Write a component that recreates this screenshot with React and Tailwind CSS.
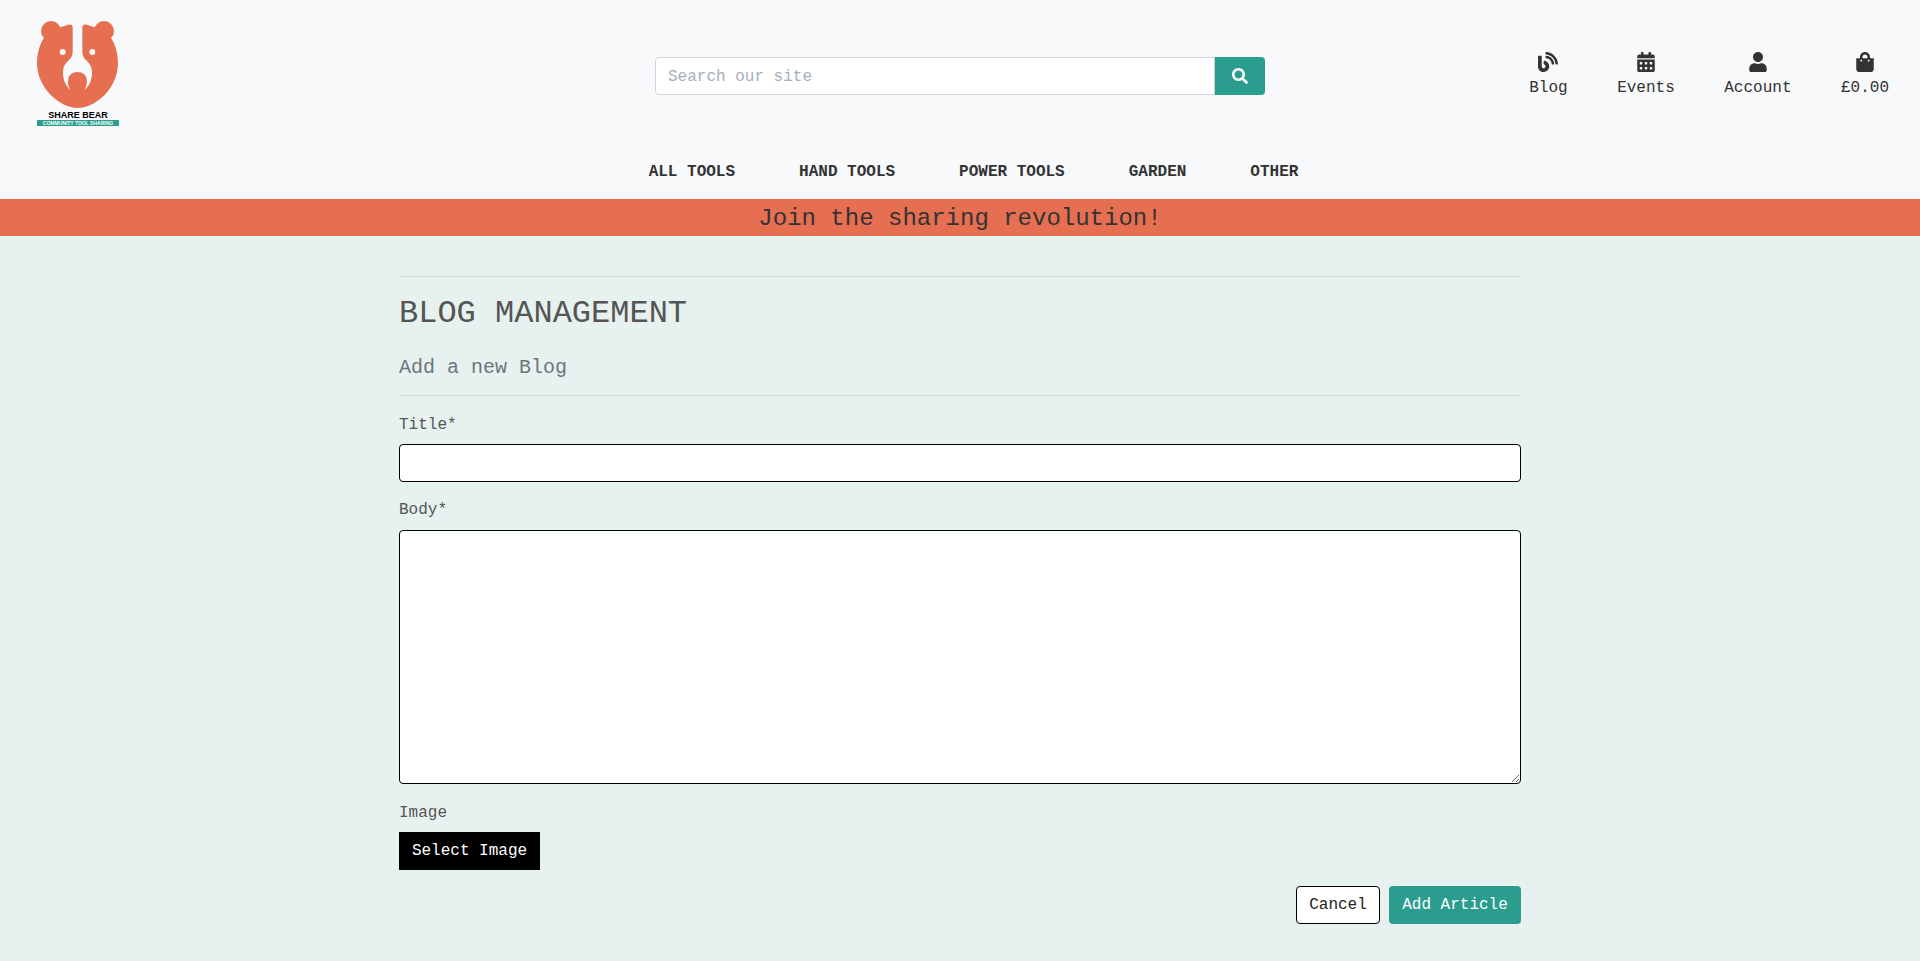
import { FaBlog, FaCalendarAlt, FaUser, FaShoppingBag, FaSearch } from "react-icons/fa";

const navLinks = ["ALL TOOLS", "HAND TOOLS", "POWER TOOLS", "GARDEN", "OTHER"];

const headerLinks = [
  { label: "Blog", icon: FaBlog },
  { label: "Events", icon: FaCalendarAlt },
  { label: "Account", icon: FaUser },
  { label: "£0.00", icon: FaShoppingBag },
];

function Logo() {
  return (
    <div className="flex flex-col w-[82px] mb-[6px]">
      <svg viewBox="37 20 82 90" className="w-[82px] h-[90px]">
        <circle cx="51" cy="31" r="10" fill="#e76f51" />
        <circle cx="104" cy="31" r="10" fill="#e76f51" />
        <path d="M44 38 C39 45 37 55 37 63 C37 88 60 108 77.7 108 C96 108 118 88 118 63 C118 55 116 45 111 38 L97 28 L86 24.5 Q82.3 24 82.3 27 L72.7 27 Q72.7 24 69 24.5 L58 28 Z" fill="#e76f51" />
        {/* wrench cut out of the face */}
        <path d="M72.7 26 L82.3 26 L82.3 50 C82.3 55 83 57 86 60 C89 63 92 66 92 73 C92 80 89 86 84.5 90 C88.5 84 88.5 72 77.5 72 C66.5 72 66.5 84 70.5 90 C66 86 63 80 63 73 C63 66 66 63 69 60 C72 57 72.7 55 72.7 50 Z" fill="#f8f9fa" />
        <circle cx="62.7" cy="52" r="3" fill="#f8f9fa" />
        <circle cx="92.3" cy="52" r="3" fill="#f8f9fa" />
      </svg>
      <div className="mt-[1px] text-center text-[9px] leading-[9px] font-black text-black font-['Liberation_Sans',sans-serif]">SHARE BEAR</div>
      <div className="h-[6px] bg-[#2a9d8f] text-center text-[5px] leading-[6px] font-bold text-white whitespace-nowrap font-['Liberation_Sans',sans-serif]">COMMUNITY TOOL SHARING</div>
    </div>
  );
}

export default function App() {
  return (
    <div className="min-h-screen bg-[#e7f1ef] font-['Liberation_Mono',monospace] text-[16px] text-[#555]">
      <header className="bg-[#f8f9fa]">
        <div className="grid grid-cols-[1fr_610px_1fr] items-center h-[152px]">
          <div className="pl-[37px]">
            <Logo />
          </div>
          <div className="flex h-[38px]">
            <input
              placeholder="Search our site"
              className="flex-1 min-w-0 h-full px-3 pt-[2px] bg-white border border-[#ced4da] rounded-l-[4px] outline-none placeholder:text-[#a6b0b8]"
            />
            <button className="w-[50px] h-full flex items-center justify-center bg-[#2a9d8f] text-white rounded-r-[4px]">
              <FaSearch className="w-4 h-4" />
            </button>
          </div>
          <div className="flex justify-end gap-[49.5px] pr-[31px] text-[#333]">
            {headerLinks.map((link) => (
              <a key={link.label} className="flex flex-col items-center leading-6">
                <link.icon className="w-[20px] h-[20px] mb-[4px]" />
                {link.label}
              </a>
            ))}
          </div>
        </div>
        <nav className="flex justify-center gap-16 pl-[27px] pb-[8px] h-[47px] items-center font-bold text-[#333]">
          {navLinks.map((link) => (
            <a key={link}>{link}</a>
          ))}
        </nav>
      </header>

      <div className="h-[37px] pt-[2px] flex items-center justify-center bg-[#e76f51] text-[24px] text-[#333]">
        Join the sharing revolution!
      </div>

      <main className="w-[1122px] mx-auto pt-[40px]">
        <hr className="border-[#d3dcdb]" />
        <h1 className="mt-[18px] text-[32px] leading-[38px] text-[#555]">BLOG MANAGEMENT</h1>
        <h2 className="mt-[23px] text-[20px] leading-[24px] text-[#6c757d]">Add a new Blog</h2>
        <hr className="mt-[15px] border-[#d3dcdb]" />

        <form className="pt-[17px]">
          <label className="block leading-6">Title*</label>
          <input className="block mt-[7px] w-full h-[38px] px-3 bg-white border border-black rounded-[4px] outline-none" />

          <label className="block mt-[16px] leading-6">Body*</label>
          <textarea className="block mt-[8px] w-full h-[254px] px-3 py-2 bg-white border border-black rounded-[4px] outline-none" />

          <label className="block mt-[17px] leading-6">Image</label>
          <button type="button" className="block mt-[7px] w-[141px] h-[38px] bg-black text-white">Select Image</button>

          <div className="flex justify-end gap-[9px] mt-[16px]">
            <button type="button" className="w-[84px] h-[38px] bg-white border border-black rounded-[4px] text-[#222]">Cancel</button>
            <button type="submit" className="w-[132px] h-[38px] bg-[#2a9d8f] rounded-[4px] text-white">Add Article</button>
          </div>
        </form>
      </main>
    </div>
  );
}
